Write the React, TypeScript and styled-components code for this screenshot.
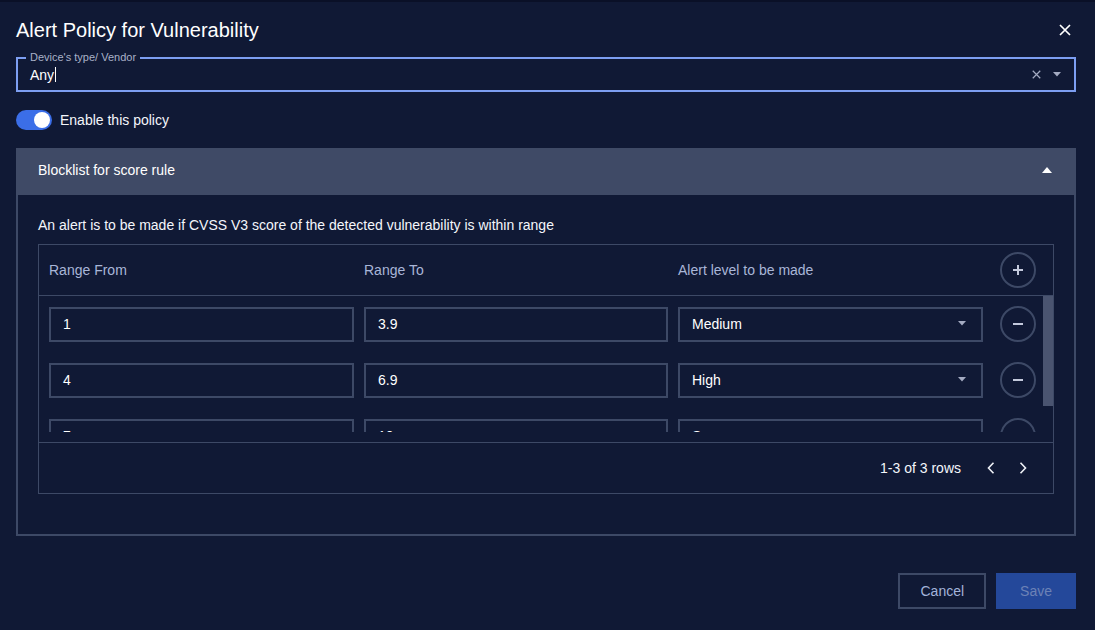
import React from "react";
import styled, { createGlobalStyle } from "styled-components";

const GlobalStyle = createGlobalStyle`
  * { box-sizing: border-box; }
  body {
    margin: 0;
    background: #101935;
    font-family: "Liberation Sans", Arial, sans-serif;
    color: #f4f6fb;
  }
`;

const Dialog = styled.div`
  width: 1095px;
  height: 630px;
  border-top: 2px solid #0a1027;
  padding: 14px 19px 0 16px;
  display: flex;
  flex-direction: column;
`;

const TitleRow = styled.div`
  height: 28px;
  display: flex;
  align-items: center;
  justify-content: space-between;
`;

const Title = styled.h1`
  margin: 0;
  font-size: 20px;
  font-weight: 400;
  line-height: 28px;
  color: #ffffff;
`;

const IconButton = styled.button`
  border: 0;
  background: none;
  padding: 0;
  display: flex;
  align-items: center;
  justify-content: center;
  cursor: pointer;
  color: inherit;
`;

const CloseButton = styled(IconButton)`
  width: 24px;
  height: 24px;
  margin-right: -1px;
`;

const Field = styled.div`
  position: relative;
  margin-top: 13px;
  height: 35px;
  border: 2px solid #7d9ef2;
  display: flex;
  align-items: center;
  padding: 0 12px;
`;

const FieldLabel = styled.span`
  position: absolute;
  top: -8px;
  left: 8px;
  padding: 0 4px;
  background: #101935;
  font-size: 11px;
  line-height: 13px;
  color: #a9b1c8;
`;

const FieldValue = styled.div`
  flex: 1;
  display: flex;
  align-items: center;
  font-size: 14px;
  color: #ffffff;
`;

const Caret = styled.span`
  display: inline-block;
  width: 1px;
  height: 15px;
  margin-left: 1px;
  background: #ffffff;
`;

const FieldAdornments = styled.div`
  display: flex;
  align-items: center;
  gap: 11px;
`;

const ToggleRow = styled.label`
  margin-top: 18px;
  height: 20px;
  display: flex;
  align-items: center;
  gap: 8px;
  font-size: 14px;
`;

const Switch = styled.span<{ $on: boolean }>`
  width: 36px;
  height: 20px;
  border-radius: 10px;
  background: ${(p) => (p.$on ? "#3b6ee8" : "#4a5674")};
  display: flex;
  align-items: center;
  justify-content: ${(p) => (p.$on ? "flex-end" : "flex-start")};
  padding: 0 2px;
`;

const Knob = styled.span`
  width: 16px;
  height: 16px;
  border-radius: 50%;
  background: #ffffff;
`;

const Accordion = styled.section`
  margin-top: 18px;
`;

const AccordionHeader = styled.div`
  height: 47px;
  background: #3f4a66;
  display: flex;
  align-items: center;
  justify-content: space-between;
  padding: 0 24px 3px 22px;
  font-size: 14px;
  color: #ffffff;
`;

const AccordionBody = styled.div`
  border: 2px solid #3d4966;
  border-top: 0;
  padding: 20px 20px 40px;
`;

const Description = styled.p`
  margin: 0 0 9px;
  font-size: 14px;
  line-height: 20px;
`;

const Table = styled.div`
  border: 1px solid #3d4966;
`;

const GridRow = styled.div`
  display: grid;
  grid-template-columns: 305px 304px 305px 50px;
  column-gap: 10px;
  align-items: center;
  padding-left: 10px;
`;

const HeaderRow = styled(GridRow)`
  height: 51px;
  border-bottom: 1px solid #3d4966;
`;

const HeaderCell = styled.div`
  font-size: 14px;
  color: #a9b6d8;
`;

const ActionCell = styled.div`
  display: flex;
  justify-content: center;
`;

const Scroller = styled.div`
  height: 147px;
  display: flex;
  align-items: flex-start;
  border-bottom: 1px solid #3d4966;
`;

const RowList = styled.div`
  flex: 1;
  height: 136px;
  overflow: hidden;
`;

const ScrollTrack = styled.div`
  width: 10px;
`;

const ScrollThumb = styled.div`
  height: 110px;
  background: #4a5470;
`;

const BodyRow = styled(GridRow)`
  height: 56px;
`;

const TextBox = styled.div`
  height: 35px;
  border: 2px solid #3d4966;
  display: flex;
  align-items: center;
  justify-content: space-between;
  padding: 0 14px 0 12px;
  font-size: 14px;
  color: #ffffff;
`;

const CircleButton = styled(IconButton)`
  width: 36px;
  height: 36px;
  border: 2px solid #3d4966;
  border-radius: 50%;
`;

const TableFooter = styled.div`
  height: 50px;
  display: flex;
  align-items: center;
  justify-content: flex-end;
  padding-right: 14px;
  font-size: 14px;
`;

const RowCount = styled.span`
  margin-right: 14px;
`;

const PageButton = styled(IconButton)`
  width: 32px;
  height: 32px;
`;

const Actions = styled.div`
  margin-top: 37px;
  display: flex;
  justify-content: flex-end;
  gap: 10px;
`;

const Button = styled.button<{ $primary?: boolean }>`
  height: 36px;
  padding: 0 ${(p) => (p.$primary ? "22px" : "20px")};
  font-family: inherit;
  font-size: 14px;
  border: 2px solid ${(p) => (p.$primary ? "#24489a" : "#3d4966")};
  background: ${(p) => (p.$primary ? "#24489a" : "transparent")};
  color: ${(p) => (p.$primary ? "#6c82b6" : "#a3b3da")};
`;

const XIcon = ({ size, color, width }: { size: number; color: string; width: number }) => (
  <svg width={size} height={size} viewBox="0 0 12 12">
    <path d="M1 1 11 11M11 1 1 11" stroke={color} strokeWidth={width} fill="none" />
  </svg>
);

const Triangle = ({ up, color }: { up?: boolean; color: string }) => (
  <svg width="10" height="6" viewBox="0 0 10 6">
    <path d={up ? "M0 6 5 0 10 6Z" : "M1 0 5 4.5 9 0Z"} fill={color} />
  </svg>
);

const PlusMinus = ({ plus }: { plus?: boolean }) => (
  <svg width="12" height="12" viewBox="0 0 12 12">
    <path d={plus ? "M6 1v10M1 6h10" : "M1 6h10"} stroke="#c3c9dc" strokeWidth="2" />
  </svg>
);

const Chevron = ({ right }: { right?: boolean }) => (
  <svg width="10" height="12" viewBox="0 0 10 12">
    <path
      d={right ? "M2.5 0.8 7.5 6 2.5 11.2" : "M7.5 0.8 2.5 6 7.5 11.2"}
      stroke="#eef0f6"
      strokeWidth="1.6"
      fill="none"
    />
  </svg>
);

const rules = [
  { from: "1", to: "3.9", level: "Medium" },
  { from: "4", to: "6.9", level: "High" },
  { from: "7", to: "10", level: "Severe" },
];

export default function App() {
  return (
    <Dialog>
      <GlobalStyle />
      <TitleRow>
        <Title>Alert Policy for Vulnerability</Title>
        <CloseButton aria-label="close">
          <XIcon size={12} color="#ffffff" width={1.7} />
        </CloseButton>
      </TitleRow>

      <Field>
        <FieldLabel>Device's type/ Vendor</FieldLabel>
        <FieldValue>
          Any
          <Caret />
        </FieldValue>
        <FieldAdornments>
          <XIcon size={9} color="#a4abc2" width={1.6} />
          <Triangle color="#a4abc2" />
        </FieldAdornments>
      </Field>

      <ToggleRow>
        <Switch $on>
          <Knob />
        </Switch>
        Enable this policy
      </ToggleRow>

      <Accordion>
        <AccordionHeader>
          Blocklist for score rule
          <Triangle up color="#ffffff" />
        </AccordionHeader>
        <AccordionBody>
          <Description>
            An alert is to be made if CVSS V3 score of the detected vulnerability is within range
          </Description>
          <Table>
            <HeaderRow>
              <HeaderCell>Range From</HeaderCell>
              <HeaderCell>Range To</HeaderCell>
              <HeaderCell>Alert level to be made</HeaderCell>
              <ActionCell>
                <CircleButton aria-label="add">
                  <PlusMinus plus />
                </CircleButton>
              </ActionCell>
            </HeaderRow>
            <Scroller>
              <RowList>
                {rules.map((r) => (
                  <BodyRow key={r.from}>
                    <TextBox>{r.from}</TextBox>
                    <TextBox>{r.to}</TextBox>
                    <TextBox>
                      {r.level}
                      <Triangle color="#a4abc2" />
                    </TextBox>
                    <ActionCell>
                      <CircleButton aria-label="remove">
                        <PlusMinus />
                      </CircleButton>
                    </ActionCell>
                  </BodyRow>
                ))}
              </RowList>
              <ScrollTrack>
                <ScrollThumb />
              </ScrollTrack>
            </Scroller>
            <TableFooter>
              <RowCount>1-3 of 3 rows</RowCount>
              <PageButton aria-label="previous">
                <Chevron />
              </PageButton>
              <PageButton aria-label="next">
                <Chevron right />
              </PageButton>
            </TableFooter>
          </Table>
        </AccordionBody>
      </Accordion>

      <Actions>
        <Button>Cancel</Button>
        <Button $primary>Save</Button>
      </Actions>
    </Dialog>
  );
}
